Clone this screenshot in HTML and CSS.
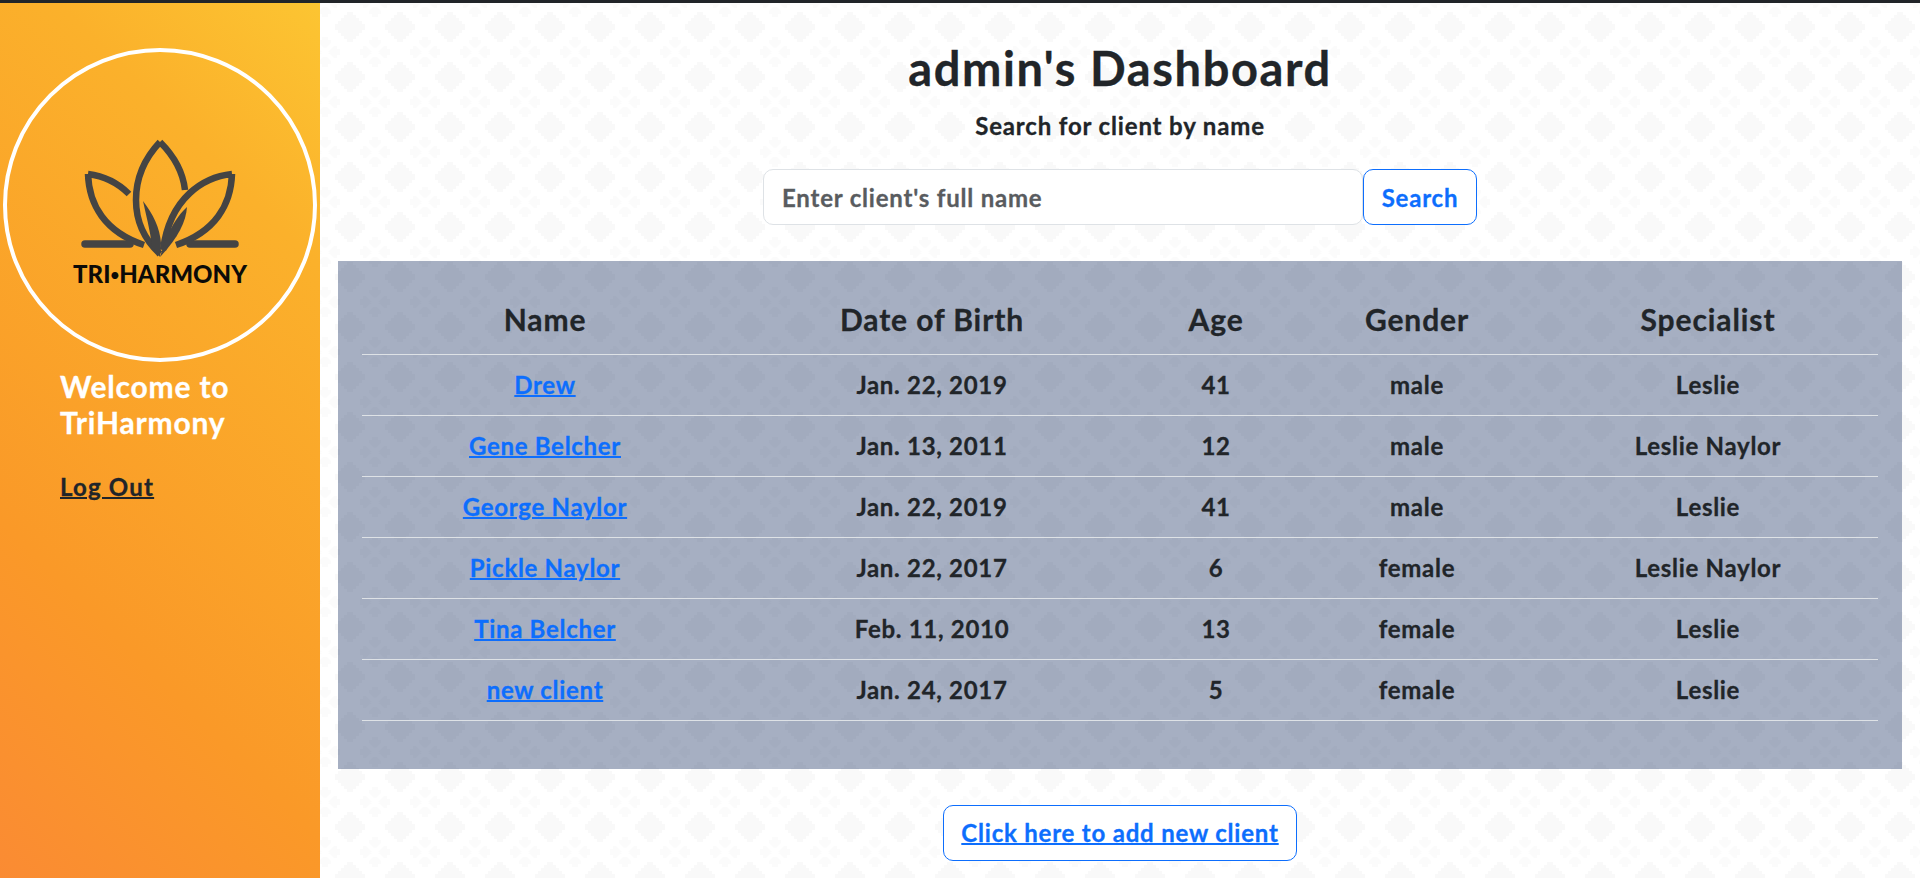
FILE: index.html
```html
<!DOCTYPE html>
<html lang="en">
<head>
    <meta charset="UTF-8">
    <meta name="viewport" content="width=device-width, initial-scale=1.0">
    <title>admin's Dashboard</title>
    <link rel="stylesheet" href="styles.css">
</head>
<body>
    <div class="layout">
        <aside class="sidebar">
            <div class="logo-circle">
                <svg class="logo" viewBox="60 130 200 160" width="200" height="160">
                    <g fill="none" stroke="#444" stroke-width="6.5">
                        <path d="M160 142 C143 160 136 180 136 200 C136 225 147 242 160 254 M160 142 C173 155 183 172 185 190"/>
                        <path d="M88 174 C89 205 105 232 144 245 M88 174 C104 176 118 183 129 194"/>
                        <path d="M232 174 C231 205 215 232 176 245 M232 174 C204 177 170 197 163 250"/>
                        <path d="M85 244 H130 M190 244 H235" stroke-width="7.5" stroke-linecap="round"/>
                    </g>
                    <path d="M143 201 C153 214 160 228 161 243 L160 257 L152 246 C150 230 146 215 143 201 Z" fill="#444"/>
                    <path d="M187 207 C186 222 178 238 160 257 L166 238 C172 226 178 215 187 207 Z" fill="#444"/>
                    <text class="logo-text" x="160" y="283" text-anchor="middle" textLength="174">TRI<tspan class="logo-dot" dy="-3">•</tspan><tspan dy="3">HARMONY</tspan></text>
                </svg>
            </div>
            <div class="sidebar-text">
                <h2>Welcome to TriHarmony</h2>
                <a href="#" class="logout">Log Out</a>
            </div>
        </aside>
        <main class="content">
            <h1>admin's Dashboard</h1>
            <p class="search-label">Search for client by name</p>
            <form class="search-form">
                <input type="text" placeholder="Enter client's full name">
                <button type="button">Search</button>
            </form>
            <div class="panel">
                <table>
                    <thead>
                        <tr>
                            <th class="col-name">Name</th>
                            <th class="col-dob">Date of Birth</th>
                            <th class="col-age">Age</th>
                            <th class="col-gender">Gender</th>
                            <th class="col-spec">Specialist</th>
                        </tr>
                    </thead>
                    <tbody>
                        <tr><td><a href="#">Drew</a></td><td>Jan. 22, 2019</td><td>41</td><td>male</td><td>Leslie</td></tr>
                        <tr><td><a href="#">Gene Belcher</a></td><td>Jan. 13, 2011</td><td>12</td><td>male</td><td>Leslie Naylor</td></tr>
                        <tr><td><a href="#">George Naylor</a></td><td>Jan. 22, 2019</td><td>41</td><td>male</td><td>Leslie</td></tr>
                        <tr><td><a href="#">Pickle Naylor</a></td><td>Jan. 22, 2017</td><td>6</td><td>female</td><td>Leslie Naylor</td></tr>
                        <tr><td><a href="#">Tina Belcher</a></td><td>Feb. 11, 2010</td><td>13</td><td>female</td><td>Leslie</td></tr>
                        <tr><td><a href="#">new client</a></td><td>Jan. 24, 2017</td><td>5</td><td>female</td><td>Leslie</td></tr>
                    </tbody>
                </table>
            </div>
            <div class="add-row">
                <a href="#" class="add-btn">Click here to add new client</a>
            </div>
        </main>
    </div>
</body>
</html>
```

FILE: styles.css
```css
* {
    box-sizing: border-box;
}
html, body {
    height: 100%;
}
body {
    margin: 0;
    overflow: hidden;
    border-top: 3px solid #212529;
    font-family: Lato, "Open Sans", sans-serif;
    font-weight: 700;
    -webkit-text-stroke: 0.3px;
    color: #212529;
    background-color: #fff;
    background-position: 25px 2px;
    background-image: url("data:image/svg+xml,%3Csvg xmlns='http://www.w3.org/2000/svg' xmlns:xlink='http://www.w3.org/1999/xlink' width='50' height='50'%3E%3Cdefs%3E%3Cpath id='d' d='M25 10h3v3h3v3h3v3h3v3h3v3v3h-3v3h-3v3h-3v3h-3v3h-3h-3v-3h-3v-3h-3v-3h-3v-3h-3v-3v-3h3v-3h3v-3h3v-3h3v-3h3z'/%3E%3Cg id='s'%3E%3Cuse xlink:href='%23d' fill='%23fbfbfb'/%3E%3Cpath d='M25 20l5 5-5 5-5-5z M14 14l3 0 8 8-3 3-8-8z M36 14l0 3-8 8-3-3 8-8z M14 36l0-3 8-8 3 3-8 8z M36 36l-3 0-8-8 3-3 8 8z' fill='%23fff'/%3E%3C/g%3E%3C/defs%3E%3Cuse xlink:href='%23d' fill='%23f9f9f9'/%3E%3Cuse xlink:href='%23s' x='-25' y='-25'/%3E%3Cuse xlink:href='%23s' x='25' y='-25'/%3E%3Cuse xlink:href='%23s' x='-25' y='25'/%3E%3Cuse xlink:href='%23s' x='25' y='25'/%3E%3C/svg%3E");
}
a {
    text-decoration-thickness: 2px;
}
.layout {
    display: flex;
    height: 100%;
}
.sidebar {
    width: 320px;
    flex-shrink: 0;
    padding: 45px 3px 0;
    background: linear-gradient(45deg, #fa8b33 0%, #fa9928 30%, #fbb12b 78%, #fcc532 100%);
}
.logo-circle {
    width: 314px;
    height: 314px;
    border: 4px solid #fff;
    border-radius: 50%;
    display: flex;
    align-items: center;
    justify-content: center;
    padding-top: 10px;
}
.logo-text {
    font-family: Lato, sans-serif;
    font-size: 24px;
    font-weight: 900;
    fill: #0c0b08;
}
.logo-dot {
    font-size: 15px;
}
.sidebar-text {
    padding: 6px 0 0 57px;
}
.sidebar-text h2 {
    margin: 0 0 32px;
    width: 210px;
    font-size: 30px;
    line-height: 36px;
    font-weight: 700;
    letter-spacing: 0.8px;
    color: #fff;
}
.logout {
    font-size: 24px;
    color: #212529;
    letter-spacing: 1.2px;
}
.content {
    flex: 1;
    padding: 0 18px;
    text-align: center;
}
h1 {
    margin: 39px 0 0;
    font-size: 47px;
    line-height: 52px;
    font-weight: 700;
    letter-spacing: 1.6px;
}
.search-label {
    margin: 18px 0 0;
    font-size: 24px;
    line-height: 28px;
    letter-spacing: 0.85px;
}
.search-form {
    display: flex;
    justify-content: center;
    margin-top: 29px;
}
.search-form input {
    width: 600px;
    height: 56px;
    padding: 0 18px;
    font: inherit;
    font-size: 24px;
    letter-spacing: 0.8px;
    background: #fff;
    border: 1px solid #dee2e6;
    border-radius: 10px;
}
.search-form input::placeholder {
    color: #595c5f;
    opacity: 1;
}
.search-form button {
    width: 114px;
    height: 56px;
    font: inherit;
    font-size: 24px;
    letter-spacing: 0.8px;
    color: #0d6efd;
    background: #fff;
    border: 1px solid #0d6efd;
    border-radius: 10px;
}
.panel {
    height: 508px;
    margin-top: 36px;
    padding: 24px;
    background: rgba(21, 45, 95, 0.38);
}
table {
    width: 100%;
    table-layout: fixed;
    border-collapse: collapse;
}
th {
    height: 69px;
    font-size: 30px;
    font-weight: 700;
    letter-spacing: 0.9px;
    border-bottom: 1px solid #dee2e6;
}
td {
    height: 61px;
    font-size: 24px;
    letter-spacing: 0.7px;
    border-bottom: 1px solid #dee2e6;
}
td a {
    color: #0d6efd;
}
.col-name {
    width: 366px;
}
.col-dob {
    width: 408px;
}
.col-age {
    width: 160px;
}
.col-gender {
    width: 242px;
}
.add-row {
    margin-top: 36px;
}
.add-btn {
    display: inline-block;
    width: 354px;
    height: 56px;
    font-size: 24px;
    line-height: 54px;
    letter-spacing: 0.8px;
    color: #0d6efd;
    background: #fff;
    border: 1px solid #0d6efd;
    border-radius: 10px;
}
```
